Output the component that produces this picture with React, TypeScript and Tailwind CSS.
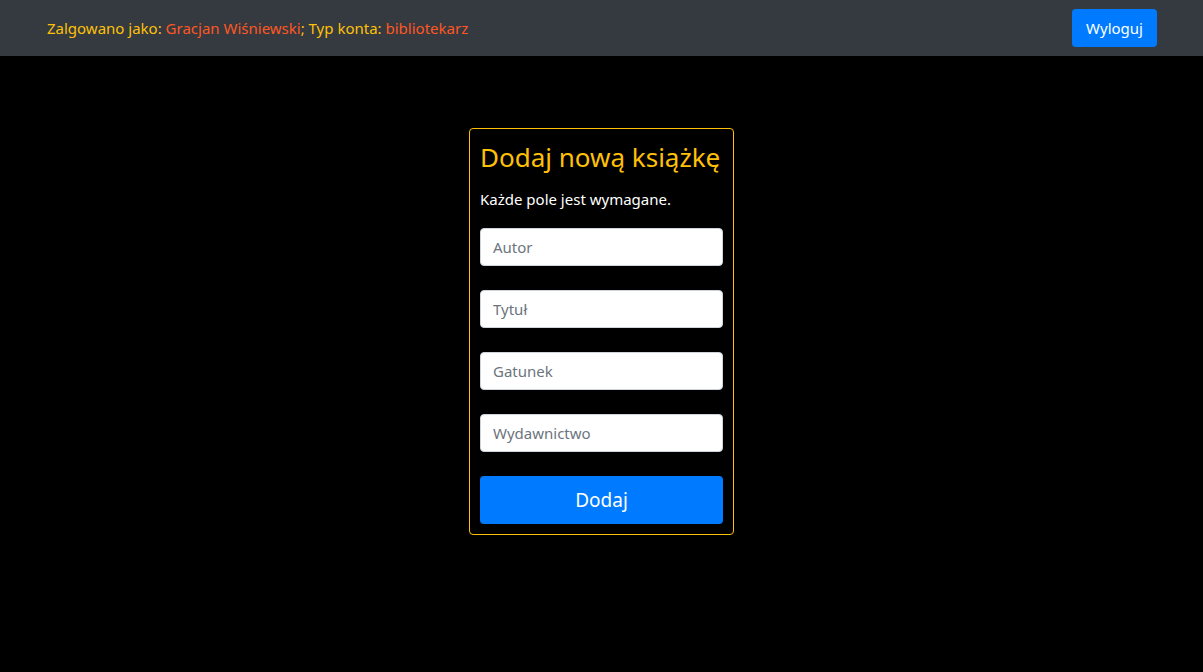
import React from "react";

const fields = ["Autor", "Tytuł", "Gatunek", "Wydawnictwo"];

export default function App() {
  return (
    <div className="min-h-[672px] bg-black font-['Noto_Sans',sans-serif] text-[15px] leading-6">
      <nav className="h-14 bg-[#343a40] flex items-center justify-between pl-[47px] pr-[46px]">
        <span className="text-[#ffc107]">
          Zalgowano jako: <span className="text-[#ff5722]">Gracjan Wiśniewski</span>; Typ konta:{" "}
          <span className="text-[#ff5722]">bibliotekarz</span>
        </span>
        <button className="h-[38px] w-[85px] rounded bg-[#007bff] text-white">Wyloguj</button>
      </nav>

      <div className="flex justify-center pt-[72px]">
        <form className="w-[265px] border border-[#ffc107] rounded px-[10px] pt-[11px] pb-[10px]">
          <h3 className="text-[26px] leading-[34px] whitespace-nowrap text-[#ffc107] mb-[13px]">
            Dodaj nową książkę
          </h3>
          <p className="text-white mb-[17px]">Każde pole jest wymagane.</p>
          {fields.map((f) => (
            <input
              key={f}
              placeholder={f}
              className="block w-full h-[38px] mb-6 px-3 bg-white border border-[#ced4da] rounded text-[#495057] placeholder:text-[#6c757d] outline-none"
            />
          ))}
          <button
            type="button"
            className="block w-full h-12 rounded bg-[#007bff] text-white text-[19px]"
          >
            Dodaj
          </button>
        </form>
      </div>
    </div>
  );
}
